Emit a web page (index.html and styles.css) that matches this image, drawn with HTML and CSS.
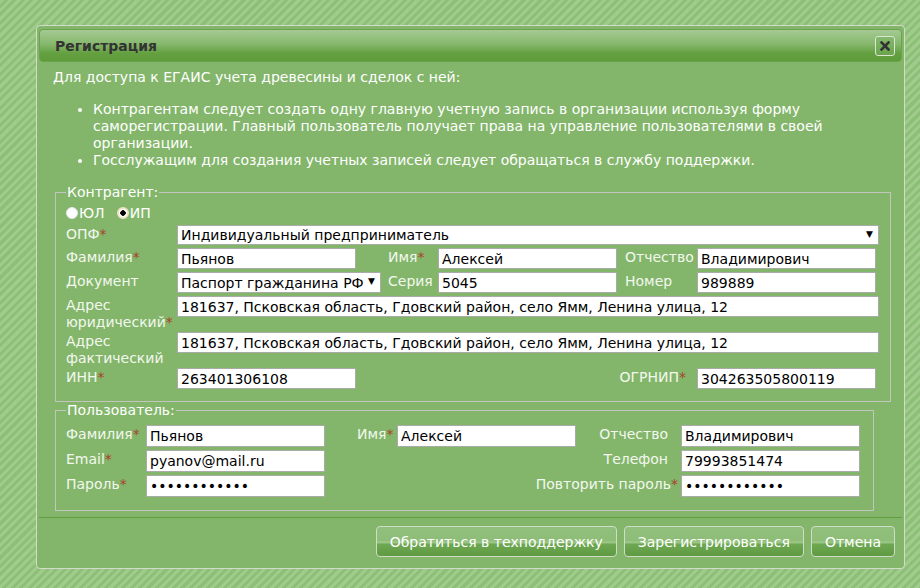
FILE: index.html
```html
<!DOCTYPE html>
<html lang="ru">
<head>
    <meta charset="UTF-8">
    <title>Регистрация</title>
    <link rel="stylesheet" href="styles.css">
</head>
<body>
    <div class="dialog">
        <div class="titlebar">
            <span class="title">Регистрация</span>
            <button class="close" title="Закрыть">
                <svg width="10" height="10" viewBox="0 0 10 10"><path d="M1.5 1.5L8.5 8.5M8.5 1.5L1.5 8.5" stroke="#333" stroke-width="2.6" stroke-linecap="square"/></svg>
            </button>
        </div>
        <div class="content">
            <p class="intro">Для доступа к ЕГАИС учета древесины и сделок с ней:</p>
            <ul class="info">
                <li>Контрагентам следует создать одну главную учетную запись в организации используя форму саморегистрации. Главный пользователь получает права на управление пользователями в своей организации.</li>
                <li>Госслужащим для создания учетных записей следует обращаться в службу поддержки.</li>
            </ul>

            <!-- Контрагент -->
            <fieldset class="group group-org">
                <legend>Контрагент:</legend>
                <div class="grid-org">
                    <div class="radios">
                        <label class="radio"><input type="radio" name="opf_type"><span>ЮЛ</span></label>
                        <label class="radio"><input type="radio" name="opf_type" checked><span>ИП</span></label>
                    </div>

                    <label class="lbl">ОПФ<i>*</i></label>
                    <div class="select-wrap wide">
                        <select><option>Индивидуальный предприниматель</option></select>
                    </div>

                    <label class="lbl">Фамилия<i>*</i></label>
                    <input class="field" type="text" value="Пьянов">
                    <label class="lbl c4">Имя<i>*</i></label>
                    <input class="field" type="text" value="Алексей">
                    <label class="lbl c7">Отчество</label>
                    <input class="field" type="text" value="Владимирович">

                    <label class="lbl">Документ</label>
                    <div class="select-wrap doc">
                        <select><option>Паспорт гражданина РФ</option></select>
                    </div>
                    <label class="lbl c4">Серия</label>
                    <input class="field" type="text" value="5045">
                    <label class="lbl c7">Номер</label>
                    <input class="field" type="text" value="989889">

                    <label class="lbl">Адрес юридический<i>*</i></label>
                    <input class="field wide" type="text" value="181637, Псковская область, Гдовский район, село Ямм, Ленина улица, 12">

                    <label class="lbl">Адрес фактический</label>
                    <input class="field wide" type="text" value="181637, Псковская область, Гдовский район, село Ямм, Ленина улица, 12">

                    <label class="lbl">ИНН<i>*</i></label>
                    <input class="field" type="text" value="263401306108">
                    <label class="lbl right ogrnip">ОГРНИП<i>*</i></label>
                    <input class="field" type="text" value="304263505800119">
                </div>
            </fieldset>

            <!-- Пользователь -->
            <fieldset class="group group-user">
                <legend>Пользователь:</legend>
                <div class="grid-user">
                    <label class="lbl">Фамилия<i>*</i></label>
                    <input class="field" type="text" value="Пьянов">
                    <label class="lbl c4">Имя<i>*</i></label>
                    <input class="field" type="text" value="Алексей">
                    <label class="lbl right">Отчество</label>
                    <input class="field" type="text" value="Владимирович">

                    <label class="lbl">Email<i>*</i></label>
                    <input class="field" type="text" value="pyanov@mail.ru">
                    <label class="lbl right">Телефон</label>
                    <input class="field" type="text" value="79993851474">

                    <label class="lbl">Пароль<i>*</i></label>
                    <input class="field" type="password" value="123456789012">
                    <label class="lbl right">Повторить пароль<i>*</i></label>
                    <input class="field" type="password" value="123456789012">
                </div>
            </fieldset>
        </div>
        <div class="buttonpane">
            <button class="button">Обратиться в техподдержку</button>
            <button class="button">Зарегистрироваться</button>
            <button class="button">Отмена</button>
        </div>
    </div>
</body>
</html>
```

FILE: styles.css
```css
body {
    margin: 0;
    padding: 25px 0 0 36px;
    height: 588px;
    box-sizing: border-box;
    font-family: "DejaVu Sans", Verdana, sans-serif;
    font-size: 14px;
    background: repeating-linear-gradient(135deg, #9fcb8b 0 3px, #8dbf78 3px 6px);
}
.dialog {
    width: 869px;
    box-sizing: border-box;
    padding: 3px 2px 2px;
    background: #83b66b;
    border: 1px solid #d3dccb;
    border-radius: 4px;
    color: #fff;
}
.titlebar {
    display: flex;
    align-items: center;
    justify-content: space-between;
    height: 33px;
    box-sizing: border-box;
    padding: 0 6px 0 15px;
    border: 1px solid #6aa34b;
    border-radius: 4px;
    background: linear-gradient(#a5ca93 0%, #86b86d 45%, #64a040 75%, #5e9b3b 100%);
}
.title {
    font-weight: bold;
    color: #333;
}
.close {
    display: flex;
    align-items: center;
    justify-content: center;
    width: 20px;
    height: 20px;
    padding: 0;
    border: 1px solid #dce6d4;
    border-radius: 3px;
    background: linear-gradient(#86b96e, #6aa44c);
    cursor: pointer;
}
.content {
    padding: 7px 14px 6px 14px;
}
.intro {
    margin: 0;
    line-height: 17px;
}
.info {
    margin: 15px 0 15px;
    padding-left: 40px;
    line-height: 17px;
}
.group {
    margin: 0 0 0 2px;
    padding: 3px 10px 11px;
    border: 1px solid #c2c6bf;
    min-width: 0;
}
.group legend {
    padding: 0 1px;
    line-height: 17px;
}
.group-org {
    width: 836px;
    box-sizing: border-box;
}
.group-user {
    width: 819px;
    box-sizing: border-box;
    padding: 6px 10px 13px;
}
.grid-org {
    display: grid;
    grid-template-columns: 111px 179px 32px 50px 179px 8px 72px 179px;
    grid-template-rows: 18px 20px 21px 21px 33px 33px 22px;
    row-gap: 3px;
}
.grid-user {
    display: grid;
    grid-template-columns: 80px 179px 32px 40px 179px 105px 179px;
    grid-auto-rows: 22px;
    row-gap: 3px;
}
.lbl {
    grid-column: 1;
    line-height: 17px;
    padding-top: 1px;
    color: #f3f8ef;
}
.lbl i {
    font-style: normal;
    color: #a8402e;
}
.lbl.c4 { grid-column: 4; }
.lbl.c7 { grid-column: 7; }
.lbl.right {
    grid-column: 4 / 7;
    text-align: right;
    padding-right: 13px;
    white-space: nowrap;
}
.lbl.right i {
    margin-right: -10px;
}
.lbl.ogrnip {
    grid-column: 4 / 8;
    padding-right: 21px;
}
.grid-user .lbl.c4 + .field + .lbl.right {
    grid-column: 6;
}
.radios {
    grid-column: 1 / -1;
    display: flex;
    gap: 12px;
    line-height: 17px;
}
.radio {
    display: flex;
    align-items: center;
}
.radio input {
    appearance: none;
    width: 12px;
    height: 12px;
    margin: 0 1px 0 0;
    border-radius: 50%;
    background: #fff;
    border: 1px solid #e6e6e6;
}
.radio input:checked {
    border: 2px solid #efe3c6;
    background: radial-gradient(circle, #000 0 2.5px, #fff 3px);
}
.field {
    width: 179px;
    height: 21px;
    box-sizing: border-box;
    margin: 0;
    padding: 0 3px;
    border: 1px solid #a9aca6;
    background: #fff;
    font-family: "DejaVu Sans", Verdana, sans-serif;
    font-size: 14px;
    color: #000;
}
.grid-user .field { height: 22px; }
.field.wide {
    grid-column: 2 / -1;
    width: calc(100% + 3px);
}
.select-wrap {
    position: relative;
    height: 20px;
}
.select-wrap.wide {
    grid-column: 2 / -1;
    width: calc(100% + 3px);
}
.select-wrap.doc {
    grid-column: 2 / 4;
    width: 204px;
    height: 21px;
}
.select-wrap select {
    appearance: none;
    width: 100%;
    height: 100%;
    margin: 0;
    padding: 0 3px;
    border: 1px solid #a9aca6;
    border-radius: 0;
    background: #fff;
    font-family: "DejaVu Sans", Verdana, sans-serif;
    font-size: 14px;
    color: #000;
}
.select-wrap::after {
    content: "▼";
    position: absolute;
    right: 6px;
    top: 4px;
    font-size: 9px;
    color: #000;
    pointer-events: none;
}
.buttonpane {
    display: flex;
    justify-content: flex-end;
    gap: 7px;
    padding: 8px 7px 9px;
    border-top: 1px solid #5f9e3e;
}
.button {
    height: 31px;
    padding: 0 13px;
    border: 1px solid #cfdcc8;
    border-radius: 4px;
    background: linear-gradient(#91c07c 0%, #8dbd77 48%, #a3cd8e 52%, #6ea752 60%, #5f9b42 100%);
    font-family: "DejaVu Sans", Verdana, sans-serif;
    font-size: 14px;
    color: #fff;
    cursor: pointer;
}
.button:hover {
    opacity: 0.9;
}
```
